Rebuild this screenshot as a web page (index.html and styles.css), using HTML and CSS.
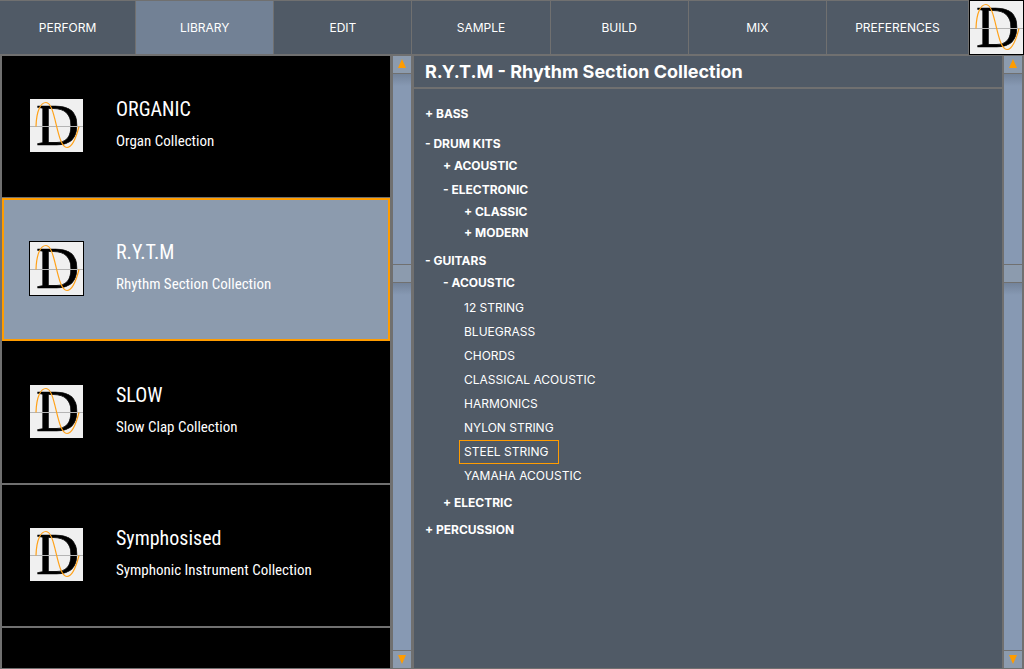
FILE: index.html
```html
<!DOCTYPE html>
<html lang="en">
<head>
<meta charset="utf-8">
<meta name="viewport" content="width=device-width, initial-scale=1">
<title>Library</title>
<link rel="stylesheet" href="styles.css">
</head>
<body>
<div class="app">
  <nav class="tabs" aria-label="Main">
    <button class="tab tab-first">PERFORM</button>
    <button class="tab tab-active" aria-current="page">LIBRARY</button>
    <button class="tab">EDIT</button>
    <button class="tab">SAMPLE</button>
    <button class="tab">BUILD</button>
    <button class="tab">MIX</button>
    <button class="tab tab-last">PREFERENCES</button>
    <svg class="logo logo-framed" viewBox="0 0 53 53" role="img" aria-label="D logo">
      <g id="logo">
        <rect width="53" height="53" fill="#f0f0f0"/>
        <text class="logo-letter" x="6" y="46">D</text>
        <path d="M0 27.5H53" stroke="#b4b4b4" fill="none"/>
        <path d="M6 27.5C6.500 11 11 3.500 16 3.500C26 3.500 26.500 48.500 37 48.500C42 48.500 46 39 49 27.500" stroke="#ffa21a" stroke-width="1.200" fill="none"/>
      </g>
    </svg>
  </nav>
  <main class="panels">
    <section class="collections" aria-label="Collections">
      <button class="card">
        <svg class="logo" viewBox="0 0 53 53" aria-hidden="true"><use href="#logo"/></svg>
        <span class="card-text"><span class="card-title">ORGANIC</span><span class="card-sub">Organ Collection</span></span>
      </button>
      <button class="card card-selected" aria-pressed="true">
        <svg class="logo logo-framed" viewBox="0 0 53 53" aria-hidden="true"><use href="#logo"/></svg>
        <span class="card-text"><span class="card-title">R.Y.T.M</span><span class="card-sub">Rhythm Section Collection</span></span>
      </button>
      <button class="card">
        <svg class="logo" viewBox="0 0 53 53" aria-hidden="true"><use href="#logo"/></svg>
        <span class="card-text"><span class="card-title">SLOW</span><span class="card-sub">Slow Clap Collection</span></span>
      </button>
      <button class="card">
        <svg class="logo" viewBox="0 0 53 53" aria-hidden="true"><use href="#logo"/></svg>
        <span class="card-text"><span class="card-title">Symphosised</span><span class="card-sub">Symphonic Instrument Collection</span></span>
      </button>
    </section>
    <div class="scrollbar scrollbar-inner">
      <button class="scroll-button" aria-label="Scroll collections up"><svg class="arrow" viewBox="0 0 8 9"><path d="M4 0L8 9H0Z"/></svg></button>
      <div class="track track-above"></div>
      <div class="thumb"></div>
      <div class="track track-below"></div>
      <button class="scroll-button" aria-label="Scroll collections down"><svg class="arrow" viewBox="0 0 8 9"><path d="M0 0H8L4 9Z"/></svg></button>
    </div>
    <section class="detail">
      <h1 class="detail-title">R.Y.T.M - Rhythm Section Collection</h1>
      <ul class="tree">
        <li><button class="row">+ BASS</button></li>
        <li>
          <button class="row">- DRUM KITS</button>
          <ul class="level-two">
            <li><button class="row">+ ACOUSTIC</button></li>
            <li>
              <button class="row">- ELECTRONIC</button>
              <ul class="level-three">
                <li><button class="row">+ CLASSIC</button></li>
                <li><button class="row">+ MODERN</button></li>
              </ul>
            </li>
          </ul>
        </li>
        <li>
          <button class="row">- GUITARS</button>
          <ul class="level-two">
            <li>
              <button class="row">- ACOUSTIC</button>
              <ul class="leaves">
                <li><button class="leaf">12 STRING</button></li>
                <li><button class="leaf">BLUEGRASS</button></li>
                <li><button class="leaf">CHORDS</button></li>
                <li><button class="leaf">CLASSICAL ACOUSTIC</button></li>
                <li><button class="leaf">HARMONICS</button></li>
                <li><button class="leaf">NYLON STRING</button></li>
                <li><button class="leaf leaf-selected" aria-pressed="true">STEEL STRING</button></li>
                <li><button class="leaf">YAMAHA ACOUSTIC</button></li>
              </ul>
            </li>
            <li><button class="row">+ ELECTRIC</button></li>
          </ul>
        </li>
        <li><button class="row">+ PERCUSSION</button></li>
      </ul>
    </section>
    <div class="scrollbar">
      <button class="scroll-button" aria-label="Scroll content up"><svg class="arrow" viewBox="0 0 8 9"><path d="M4 0L8 9H0Z"/></svg></button>
      <div class="track track-above"></div>
      <div class="thumb"></div>
      <div class="track track-below"></div>
      <button class="scroll-button" aria-label="Scroll content down"><svg class="arrow" viewBox="0 0 8 9"><path d="M0 0H8L4 9Z"/></svg></button>
    </div>
  </main>
</div>
</body>
</html>
```
FILE: styles.css
```css
:root {
  --slate: #505a66;
  --line: #707070;
  --steel: #8c9bae;
  --orange: #ff9c00;
}
* { box-sizing: border-box; }
body {
  margin: 0;
  background: var(--slate);
  color: #fff;
  font-family: Inter, "Liberation Sans", sans-serif;
  font-size: 12px;
}
button {
  margin: 0;
  padding: 0;
  border: 0;
  background: none;
  color: inherit;
  font: inherit;
  text-align: left;
}
ul { margin: 0; padding: 0; list-style: none; }
.app { display: flex; flex-direction: column; height: 100vh; }

.tabs {
  display: flex;
  flex: none;
  height: 56px;
  border-top: 1px solid var(--line);
  border-bottom: 2px solid var(--line);
}
.tab {
  flex: 138 1 0;
  border-right: 1px solid var(--line);
  text-align: center;
}
.tab-first { flex-grow: 136; }
.tab-last { flex-grow: 142; }
.tab-active { background: #728195; }
.tabs .logo { margin: -1px 0; }

.logo { flex: none; width: 53px; height: 53px; }
.logo-framed { width: 55px; height: 55px; border: 1px solid #000; }
.logo-letter {
  font-family: "Liberation Serif", serif;
  font-size: 60px;
  stroke: #000;
  stroke-width: 0.6;
}

.panels {
  display: grid;
  grid-template-columns: 390fr 24px 588fr 22px;
  flex: 1;
  min-height: 0;
  border-bottom: 1px solid var(--line);
}
.collections {
  overflow: hidden;
  background: #000;
  border-left: 2px solid var(--line);
}
.card {
  display: flex;
  align-items: center;
  gap: 33px;
  width: 100%;
  height: 143px;
  padding: 0 28px 2px;
  border-bottom: 2px solid var(--line);
  font-family: "Roboto Condensed", Roboto, sans-serif;
}
.card-selected {
  gap: 32px;
  margin: -1px 0 1px;
  padding: 0 27px;
  background: var(--steel);
  border-bottom-color: var(--orange);
  box-shadow: inset 2px 0 var(--orange), inset -2px 0 var(--orange), inset 0 2px var(--orange);
}
.card-text { display: flex; flex-direction: column; gap: 8px; padding-bottom: 2px; }
.card-title { font-size: 20px; line-height: 24px; }
.card-sub { font-size: 15px; line-height: 24px; }

.scrollbar {
  display: flex;
  flex-direction: column;
  border: solid var(--line);
  border-width: 0 2px;
}
.scrollbar-inner { border-width: 0 3px; }
.scroll-button {
  display: flex;
  align-items: center;
  justify-content: center;
  flex: none;
  height: 18px;
  padding-bottom: 2px;
  background: var(--steel);
  border-bottom: 1px solid var(--line);
}
.scroll-button:last-child { padding-bottom: 0; border-top: 1px solid var(--line); border-bottom: 0; }
.arrow { width: 8px; height: 9px; fill: var(--orange); }
.track { background: linear-gradient(#73839a, #8799b3 12px); }
.track-above { flex: 190 1 0; }
.track-below { flex: 368 1 0; }
.thumb {
  flex: none;
  height: 19px;
  background: var(--steel);
  border: solid var(--line);
  border-width: 1px 0;
}

.detail { overflow: hidden; }
.detail-title {
  margin: 0;
  padding: 0 11px;
  border-bottom: 2px solid var(--line);
  font-size: 18px;
  font-weight: 700;
  line-height: 31px;
}
.tree { padding: 14px 11px; }
.tree > li + li { margin-top: 8px; }
.tree > li:last-child { margin-top: 5px; }
.row { display: block; height: 22px; font-weight: 700; line-height: 22px; }
.level-two { padding-left: 18px; }
.level-two > li + li { margin-top: 2px; }
.level-three { padding-left: 21px; }
.level-three .row { height: 21px; line-height: 21px; margin-bottom: -1px; }
.level-three li + li { margin-top: 1px; }
.leaves { padding: 2px 0 2px 16px; }
.leaf {
  display: block;
  height: 24px;
  padding: 0 10px 0 4px;
  border: 1px solid transparent;
  line-height: 22px;
}
.leaf-selected { border-color: var(--orange); }
```
